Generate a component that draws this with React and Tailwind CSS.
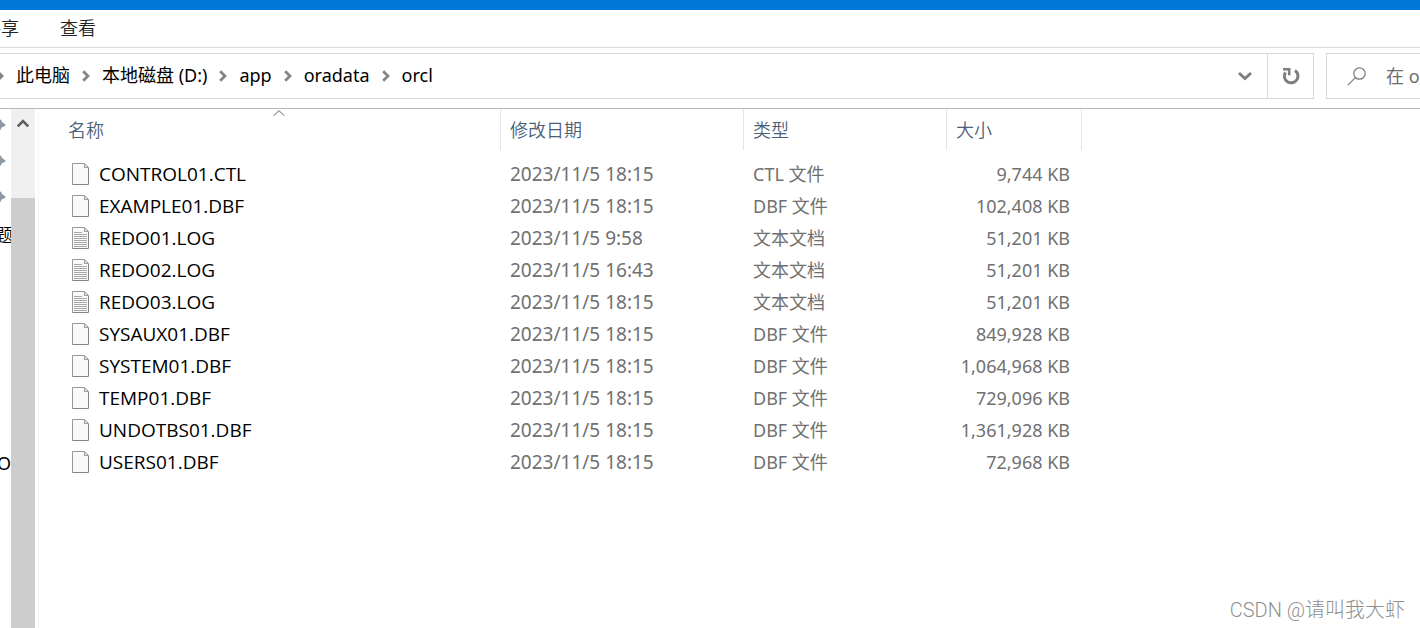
import React from 'react';

const files = [
  { name: 'CONTROL01.CTL', date: '2023/11/5 18:15', type: 'CTL 文件', size: '9,744 KB' },
  { name: 'EXAMPLE01.DBF', date: '2023/11/5 18:15', type: 'DBF 文件', size: '102,408 KB' },
  { name: 'REDO01.LOG', date: '2023/11/5 9:58', type: '文本文档', size: '51,201 KB', text: true },
  { name: 'REDO02.LOG', date: '2023/11/5 16:43', type: '文本文档', size: '51,201 KB', text: true },
  { name: 'REDO03.LOG', date: '2023/11/5 18:15', type: '文本文档', size: '51,201 KB', text: true },
  { name: 'SYSAUX01.DBF', date: '2023/11/5 18:15', type: 'DBF 文件', size: '849,928 KB' },
  { name: 'SYSTEM01.DBF', date: '2023/11/5 18:15', type: 'DBF 文件', size: '1,064,968 KB' },
  { name: 'TEMP01.DBF', date: '2023/11/5 18:15', type: 'DBF 文件', size: '729,096 KB' },
  { name: 'UNDOTBS01.DBF', date: '2023/11/5 18:15', type: 'DBF 文件', size: '1,361,928 KB' },
  { name: 'USERS01.DBF', date: '2023/11/5 18:15', type: 'DBF 文件', size: '72,968 KB' },
];

const path = ['此电脑', '本地磁盘 (D:)', 'app', 'oradata', 'orcl'];

const Chevron = () => (
  <svg className="w-2 h-3 shrink-0" viewBox="0 0 8 12" fill="none" stroke="#858585" strokeWidth="2.8">
    <path d="M1.2 1.2 6 6 1.2 10.8" />
  </svg>
);

const FileIcon = ({ text }) => (
  <svg className="w-[18px] h-[22px] shrink-0" viewBox="0 0 18 22" fill="none">
    <path d="M.5.5h12l4 4v17H.5z" fill="#f7f9fa" />
    <path d="M.5 21.5V.5h12l4 4" stroke="#9a9a9a" />
    <path d="M.5 21.5h16V4.5" stroke="#858585" />
    <path d="M12.5.5v4h4z" fill="#e6e6e6" stroke="#9a9a9a" />
    {text && <path d="M2 5.5h8M2 7.5h13M2 9.5h13M2 11.5h13M2 13.5h13M2 15.5h13M2 17.5h13M2 19.5h13" stroke="#a8a8a8" />}
  </svg>
);

const Pin = () => (
  <svg className="w-[11px] h-3 shrink-0" viewBox="0 0 11 12" fill="#8d9aa3">
    <path d="M0 3h5V.5L6.5 1v1.5L11 6 8 8H7l-2 3.5V9H0z" />
  </svg>
);

const Ribbon = () => (
  <nav className="h-[38px] flex items-center gap-[41px] pb-0.5 border-b border-[#dadbdc] text-[#222] font-[350]">
    <button className="-ml-[17px]">共享</button>
    <button>查看</button>
  </nav>
);

const AddressBar = () => (
  <div className="flex gap-3 pt-[5px] pb-[9px] border-b border-[#b9b9b9]">
    <div className="flex-1 min-w-0 h-[46px] flex border-y border-r border-[#d9d9d9]">
      <ol className="flex-1 min-w-0 -ml-1 flex items-center gap-3 text-black whitespace-nowrap">
        {path.map((folder) => (
          <li key={folder} className="flex items-center gap-3">
            <Chevron />
            <button className="pb-0.5">{folder}</button>
          </li>
        ))}
      </ol>
      <button aria-label="历史记录" className="w-[45px] flex items-center justify-center">
        <svg className="w-[14px] h-[10px]" viewBox="0 0 14 10" fill="none" stroke="#7d7d7d" strokeWidth="2.8">
          <path d="M1 2 7 7.5 13 2" />
        </svg>
      </button>
      <button aria-label="刷新" className="w-[46px] flex items-center justify-center border-l border-[#d9d9d9]">
        <svg className="w-[18px] h-[18px]" viewBox="0 0 18 18" fill="none" stroke="#7d7d7d" strokeWidth="3">
          <path d="M13 3.4A6.8 6.8 0 1 1 3.4 5.4" />
          <path d="M1 2.3h6.2v6" strokeWidth="2.6" />
        </svg>
      </button>
    </div>
    <label className="w-[94px] h-[46px] flex items-center border border-r-0 border-[#d9d9d9] overflow-hidden">
      <svg className="w-[19px] h-[19px] ml-5 shrink-0" viewBox="0 0 19 19" fill="none" stroke="#7a7a7a" strokeWidth="1.2">
        <circle cx="12.5" cy="6.5" r="5.7" />
        <path d="M8.4 10.6.8 18.2" />
      </svg>
      <input
        type="search"
        aria-label="搜索"
        placeholder="在 orcl 中搜索"
        className="ml-5 w-40 shrink-0 outline-none placeholder:text-[#6d6d6d]"
      />
    </label>
  </div>
);

const NavPane = () => (
  <aside className="w-[39px] shrink-0 flex border-r border-[#f5f5f5]">
    <ul className="w-[11px] -mt-0.5 overflow-hidden text-black whitespace-nowrap">
      {[1, 2, 3].map((n) => (
        <li key={n} className="h-9 flex items-center -ml-[5px]">
          <Pin />
        </li>
      ))}
      <li className="h-10 flex items-center justify-end -mr-0.5 font-[350]">主题</li>
      <li className="mt-[190px] h-9 flex items-center justify-end">O</li>
    </ul>
    <div className="w-6 flex flex-col bg-[#f0f0f0]">
      <button aria-label="向上滚动" className="h-[89px] flex justify-center pt-[9px]">
        <svg className="w-3 h-[10px]" viewBox="0 0 12 10" fill="none" stroke="#5f5f5f" strokeWidth="2.6">
          <path d="M.8 8.4 6 3l5.2 5.4" />
        </svg>
      </button>
      <div className="flex-1 bg-[#cdcdcd]" />
    </div>
  </aside>
);

const FileTable = () => (
  <table className="w-[1043px] table-fixed text-left">
    <colgroup>
      <col className="w-[462px]" />
      <col className="w-[243px]" />
      <col className="w-[203px]" />
      <col className="w-[135px]" />
    </colgroup>
    <thead className="text-[#4c607a]">
      <tr>
        <th className="p-0 font-[350]">
          <div className="relative h-[41px] flex items-center pl-[29px] border-r border-[#e5e5e5]">
            名称
            {/* ascending sort mark */}
            <svg className="absolute left-60 top-px -translate-x-1/2 w-3 h-[6px]" viewBox="0 0 12 6" fill="none" stroke="#666">
              <path d="M.5 5.8 6 .7l5.5 5.1" />
            </svg>
          </div>
        </th>
        {['修改日期', '类型', '大小'].map((label) => (
          <th key={label} className="p-0 font-[350]">
            <div className="h-[41px] flex items-center pl-[9px] border-r border-[#e5e5e5]">{label}</div>
          </th>
        ))}
      </tr>
    </thead>
    <tbody className="text-[#707070] before:block before:h-2">
      {files.map((file) => (
        <tr key={file.name} className="h-8">
          <td className="p-0 pl-[33px] text-black text-[19px] font-['Open_Sans',sans-serif]">
            <div className="flex items-center gap-[9px]">
              <FileIcon text={file.text} />
              <span>{file.name}</span>
            </div>
          </td>
          <td className="p-0 pl-[9px] text-[19px]">{file.date}</td>
          <td className="p-0 pl-[9px]">{file.type}</td>
          <td className="p-0 pr-3 text-right">{file.size}</td>
        </tr>
      ))}
    </tbody>
  </table>
);

export default function App() {
  return (
    <div className="relative min-h-screen flex flex-col bg-white overflow-hidden text-[18px] leading-6 font-['Noto_Sans','Noto_Sans_CJK_SC',sans-serif]">
      <div className="h-[10px] bg-[#0078d7]" />
      <Ribbon />
      <AddressBar />
      <div className="flex-1 flex">
        <NavPane />
        <main className="flex-1 min-w-0">
          <FileTable />
        </main>
      </div>
      <p className="absolute right-[15px] bottom-[6px] text-[20px] font-light text-[#8f8f8f] font-['Roboto','Noto_Sans_CJK_SC',sans-serif]">
        CSDN @请叫我大虾
      </p>
    </div>
  );
}
